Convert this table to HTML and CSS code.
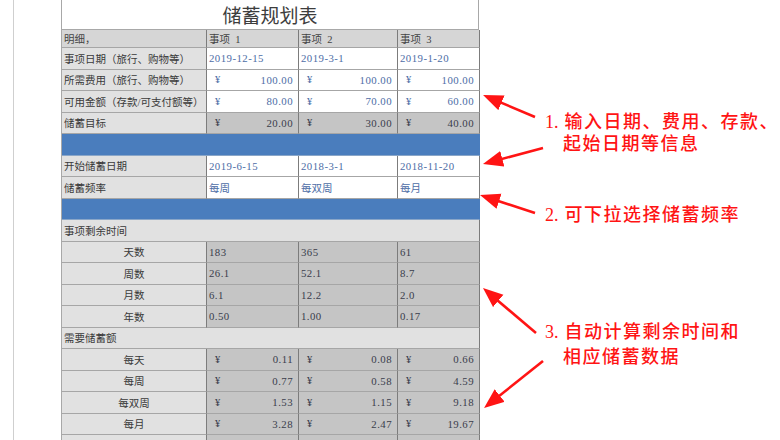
FILE: index.html
```html
<!DOCTYPE html>
<html lang="zh-CN">
<head>
<meta charset="utf-8">
<title>储蓄规划表</title>
<link rel="stylesheet" href="styles.css">
</head>
<body>
<div class="page">
  <div class="gutter"></div>
  <div class="sheet">
    <div class="title">储蓄规划表</div>
    <div class="grid">
      <div class="c hd">明细，</div>
      <div class="c hd">事项&nbsp; 1</div>
      <div class="c hd">事项&nbsp; 2</div>
      <div class="c hd">事项&nbsp; 3</div>

      <div class="c lb">事项日期（旅行、购物等）</div>
      <div class="c in num">2019-12-15</div>
      <div class="c in num">2019-3-1</div>
      <div class="c in num">2019-1-20</div>

      <div class="c lb">所需费用（旅行、购物等）</div>
      <div class="c in cur"><span>¥</span><span>100.00</span></div>
      <div class="c in cur"><span>¥</span><span>100.00</span></div>
      <div class="c in cur"><span>¥</span><span>100.00</span></div>

      <div class="c lb">可用金额（存款/可支付额等）</div>
      <div class="c in cur"><span>¥</span><span>80.00</span></div>
      <div class="c in cur"><span>¥</span><span>70.00</span></div>
      <div class="c in cur"><span>¥</span><span>60.00</span></div>

      <div class="c lb">储蓄目标</div>
      <div class="c calc cur"><span>¥</span><span>20.00</span></div>
      <div class="c calc cur"><span>¥</span><span>30.00</span></div>
      <div class="c calc cur"><span>¥</span><span>40.00</span></div>

      <div class="c band"></div>

      <div class="c lb">开始储蓄日期</div>
      <div class="c in num">2019-6-15</div>
      <div class="c in num">2018-3-1</div>
      <div class="c in num">2018-11-20</div>

      <div class="c lb">储蓄频率</div>
      <div class="c in">每周</div>
      <div class="c in">每双周</div>
      <div class="c in">每月</div>

      <div class="c band"></div>

      <div class="c sec">事项剩余时间</div>

      <div class="c lb ctr">天数</div>
      <div class="c calc num">183</div>
      <div class="c calc num">365</div>
      <div class="c calc num">61</div>

      <div class="c lb ctr">周数</div>
      <div class="c calc num">26.1</div>
      <div class="c calc num">52.1</div>
      <div class="c calc num">8.7</div>

      <div class="c lb ctr">月数</div>
      <div class="c calc num">6.1</div>
      <div class="c calc num">12.2</div>
      <div class="c calc num">2.0</div>

      <div class="c lb ctr">年数</div>
      <div class="c calc num">0.50</div>
      <div class="c calc num">1.00</div>
      <div class="c calc num">0.17</div>

      <div class="c sec">需要储蓄额</div>

      <div class="c lb ctr">每天</div>
      <div class="c calc cur"><span>¥</span><span>0.11</span></div>
      <div class="c calc cur"><span>¥</span><span>0.08</span></div>
      <div class="c calc cur"><span>¥</span><span>0.66</span></div>

      <div class="c lb ctr">每周</div>
      <div class="c calc cur"><span>¥</span><span>0.77</span></div>
      <div class="c calc cur"><span>¥</span><span>0.58</span></div>
      <div class="c calc cur"><span>¥</span><span>4.59</span></div>

      <div class="c lb ctr">每双周</div>
      <div class="c calc cur"><span>¥</span><span>1.53</span></div>
      <div class="c calc cur"><span>¥</span><span>1.15</span></div>
      <div class="c calc cur"><span>¥</span><span>9.18</span></div>

      <div class="c lb ctr">每月</div>
      <div class="c calc cur"><span>¥</span><span>3.28</span></div>
      <div class="c calc cur"><span>¥</span><span>2.47</span></div>
      <div class="c calc cur"><span>¥</span><span>19.67</span></div>

      <div class="c lb"></div>
      <div class="c calc"></div>
      <div class="c calc"></div>
      <div class="c calc"></div>
    </div>
  </div>

  <svg class="arrows" width="780" height="440" viewBox="0 0 780 440" aria-hidden="true">
    <defs>
      <marker id="head" markerUnits="userSpaceOnUse" markerWidth="22" markerHeight="18" refX="12" refY="8" orient="auto">
        <path d="M0,0 L20,8 L0,16 Z" fill="#ff1414"/>
      </marker>
    </defs>
    <g stroke="#ff1414" stroke-width="2.6" marker-end="url(#head)">
      <line x1="535" y1="117" x2="490.4" y2="98.1"/>
      <line x1="543" y1="148" x2="490.7" y2="161.9"/>
      <line x1="535" y1="213" x2="487.6" y2="197.5"/>
      <line x1="536" y1="333" x2="489.1" y2="293.2"/>
      <line x1="543" y1="361" x2="490.3" y2="403"/>
    </g>
  </svg>

  <div class="note n1"><span class="num-lead">1.</span> 输入日期、费用、存款、<br><span class="indent">起始日期等信息</span></div>
  <div class="note n2"><span class="num-lead">2.</span> 可下拉选择储蓄频率</div>
  <div class="note n3"><span class="num-lead">3.</span> 自动计算剩余时间和<br><span class="indent">相应储蓄数据</span></div>
</div>
</body>
</html>
```

FILE: styles.css
```css
* { box-sizing: border-box; }
html, body { margin: 0; padding: 0; background: #fff; }
body { width: 780px; height: 440px; overflow: hidden; }

.page {
  position: relative;
  display: flex;
  align-items: flex-start;
  width: 780px;
  height: 440px;
}

.gutter {
  width: 14px;
  height: 440px;
  border-right: 1px solid #cfcfcf;
  flex: none;
}

.sheet {
  margin-left: 47px;
  width: 418px;
  flex: none;
  border-left: 1px solid #a8a8a8;
  font-family: "Liberation Serif", "Noto Sans CJK SC", serif;
  font-size: 10.5px;
  color: #3c3c3c;
}

.title {
  height: 30px;
  border-bottom: 1px solid #a8a8a8;
  border-right: 1px solid #a8a8a8;
  text-align: center;
  font-family: "Noto Sans CJK SC", sans-serif;
  font-size: 19px;
  line-height: 29px;
  color: #3d3d3d;
}

.grid {
  display: grid;
  grid-template-columns: 145px 92px 99px 82px;
  grid-template-rows: 18px;
  grid-auto-rows: 21.5px;
}

.c {
  display: flex;
  align-items: center;
  padding: 0 2px;
  border-right: 1px solid #7c7c7c;
  border-bottom: 1px solid #a6a6a6;
  white-space: nowrap;
  overflow: hidden;
}

.num, .cur span:last-child { letter-spacing: 0.45px; font-size: 10.8px; }

.hd { background: #d6d6d6; color: #444; }
.lb { background: #e1e1e1; color: #3a3a3a; }
.ctr { justify-content: center; }
.in { background: #fff; color: #4d6da6; }
.calc { background: #c5c5c5; color: #3a3d4c; }

.cur {
  justify-content: space-between;
  padding: 0 5px 0 8px;
}

.band {
  grid-column: 1 / -1;
  background: #4a7dbd;
  border-right-color: #4a7dbd;
  border-bottom-color: #8aa6c8;
}

.sec {
  grid-column: 1 / -1;
  background: #e1e1e1;
  color: #3a3a3a;
}

.arrows {
  position: absolute;
  left: 0;
  top: 0;
  pointer-events: none;
}

.note {
  position: absolute;
  left: 545px;
  font-family: "Liberation Serif", "Noto Sans CJK SC", serif;
  font-size: 18px;
  font-weight: 500;
  letter-spacing: 1.5px;
  color: #ff1414;
  white-space: nowrap;
}
.note .num-lead { letter-spacing: 0; }
.note .indent { padding-left: 18px; }

.n1 { top: 111px; line-height: 22px; }
.n2 { top: 204px; line-height: 22px; }
.n3 { top: 320px; line-height: 25px; }
```
